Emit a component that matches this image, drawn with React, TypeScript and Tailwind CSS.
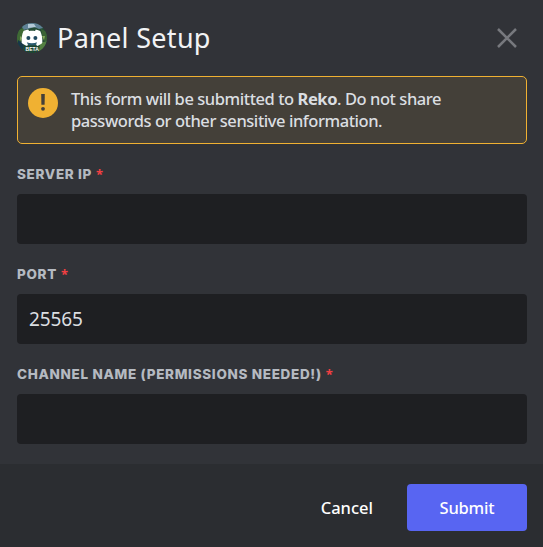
import { useState } from "react";

function Avatar() {
  return (
    <svg className="size-[30px] shrink-0" viewBox="0 0 30 30" aria-label="Reko">
      <defs>
        <clipPath id="avatar-clip">
          <circle cx="15" cy="15" r="15" />
        </clipPath>
        <filter id="avatar-soft">
          <feGaussianBlur stdDeviation="0.7" />
        </filter>
      </defs>
      <g clipPath="url(#avatar-clip)">
        <rect width="30" height="30" fill="#234b35" />
        <g filter="url(#avatar-soft)">
          <path d="M4 0h22v5l-4 1-5-2-6 2-5 1z" fill="#5f8196" />
          <path d="M11 1h6l2 3-8 1z" fill="#b4c9d7" />
          <path d="M0 8l6-3 2 5-3 8-5 2z" fill="#416b36" />
          <path d="M24 6l6 3v10l-4-2-1-6z" fill="#3b6234" />
          <path d="M1 17l6 4-1 6-5-3z" fill="#193948" />
          <path d="M23 20l7-2-3 8-5 2z" fill="#527f43" />
          <path d="M7 23h15l-3 7h-9z" fill="#1b4530" />
          <path d="M3 13l2 2-2 3zM25 13l2 4 1-4z" fill="#86a85c" />
        </g>
        <path
          d="M11.200 6.500c-2 .3-3.600.9-4.700 1.600C4.900 11.200 4.400 15 4.700 20c1.800 1.500 3.600 2.500 5.400 2.900l1.300-2c2.500.6 4.900.6 7.400 0l1.300 2c1.800-.4 3.500-1.400 5.200-2.900.3-5-.6-8.800-2.100-11.900-1.200-.7-2.600-1.300-4.400-1.600l-.8 1.500c-1.900-.3-4-.3-5.900 0z"
          fill="#fff"
        />
        <circle cx="11.400" cy="15" r="2" fill="#214a61" />
        <circle cx="18.400" cy="15" r="2" fill="#214a61" />
        <path d="M9.800 19.300c3 1.300 7.200 1.300 10.200 0l-1.200 3h-7.600z" fill="#2c5c70" />
        <text x="15.200" y="27.500" textAnchor="middle" fontFamily="Liberation Sans, sans-serif" fontSize="5" fontWeight="700" fill="#fff">BETA</text>
      </g>
    </svg>
  );
}

function Field({ label, initial = "" }: { label: string; initial?: string }) {
  const [value, setValue] = useState(initial);
  return (
    <label className="block h-[100px]">
      <span className="flex h-[30px] font-['Inter',sans-serif] text-[13.500px] leading-[20px] font-extrabold tracking-[0.68px] text-[#b5bac1]">
        {label}
        <span className="ml-[4px] font-['Noto_Sans',sans-serif] text-[13px] font-bold tracking-normal text-[#f23f42]">*</span>
      </span>
      <input
        className="block h-[50px] w-full rounded-[4px] bg-[#1e1f22] px-3 text-[19px] tracking-[-0.1px] text-[#dbdee1] outline-none"
        value={value}
        onChange={(e) => setValue(e.target.value)}
      />
    </label>
  );
}

export default function App() {
  return (
    <div className="flex h-[547px] w-[543px] flex-col overflow-hidden bg-[#313338] font-['Noto_Sans',sans-serif]">
      <header className="flex h-[76px] items-center pl-[17px] pr-[26px]">
        <Avatar />
        <h1 className="ml-[10px] text-[27px] leading-[34px] tracking-[0.3px] whitespace-nowrap text-[#f2f3f5]">Panel Setup</h1>
        <button className="ml-auto text-[#77797e]" aria-label="Close">
          <svg className="size-[20px]" viewBox="0 0 20 20" fill="none" stroke="currentColor" strokeWidth="2.500">
            <path d="M1 1l18 18M19 1L1 19" />
          </svg>
        </button>
      </header>

      <main className="pl-[17px] pr-4">
        <div className="flex h-[68px] rounded-[5px] border border-[#f0b132] bg-[#444039] pt-[11px] pl-[10px]">
          <svg className="size-[30px] shrink-0" viewBox="0 0 30 30">
            <circle cx="15" cy="15" r="15" fill="#f0b132" />
            <path d="M13.200 6h3.600l-.2 10.800h-3.200z" fill="#444039" />
            <circle cx="15" cy="20.800" r="1.900" fill="#444039" />
          </svg>
          <p className="ml-[13px] text-[16.500px] leading-[22px] font-medium tracking-[-0.44px] whitespace-nowrap text-[#dbdee1]">
            <span className="block">This form will be submitted to <b className="font-bold">Reko</b>. Do not share</span>
            <span className="block">passwords or other sensitive information.</span>
          </p>
        </div>
        <div className="pt-5">
          <Field label="SERVER IP" />
          <Field label="PORT" initial="25565" />
          <Field label="CHANNEL NAME (PERMISSIONS NEEDED!)" />
        </div>
      </main>

      <footer className="flex flex-1 items-start justify-end bg-[#2b2d31] pt-5 pr-4 text-[16.500px] font-medium text-white">
        <button className="mr-[34px] h-[47px] pt-[2px]">Cancel</button>
        <button className="h-[47px] w-[120px] rounded-[4px] bg-[#5865f2] pt-[2px] tracking-[-0.2px]">Submit</button>
      </footer>
    </div>
  );
}
